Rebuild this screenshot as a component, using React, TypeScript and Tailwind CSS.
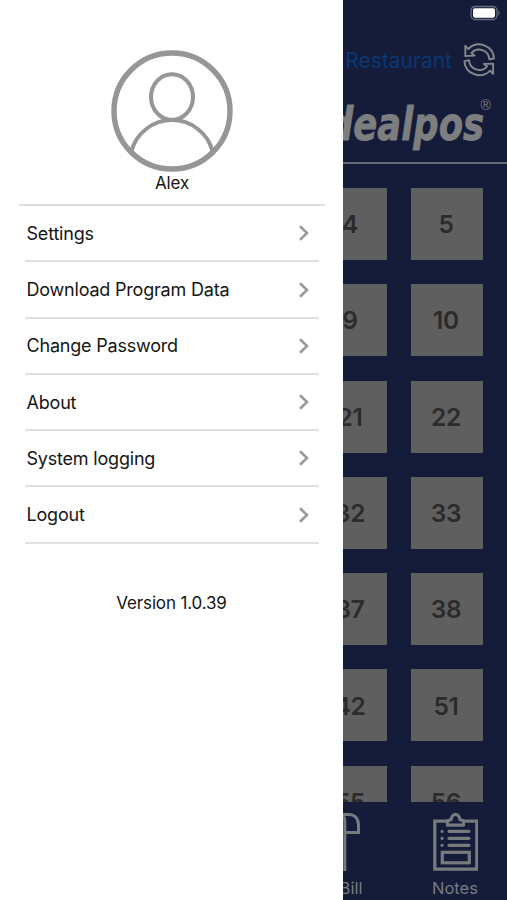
import { useState } from 'react'

const MENU_ITEMS = [
  'Settings',
  'Download Program Data',
  'Change Password',
  'About',
  'System logging',
  'Logout',
]

const TABLE_ROWS = [
  ['4', '5'],
  ['9', '10'],
  ['21', '22'],
  ['32', '33'],
  ['37', '38'],
  ['42', '51'],
  ['55', '56'],
]

export default function App() {
  const [selected, setSelected] = useState<string | null>(null)

  return (
    <div className="flex w-[507px] h-[900px] overflow-hidden bg-[#151c39] font-[Inter,'Liberation_Sans',sans-serif]">
      <Drawer selected={selected} onSelect={setSelected} />
      <TablesScreen />
    </div>
  )
}

function Drawer({ selected, onSelect }: { selected: string | null; onSelect: (item: string) => void }) {
  return (
    <aside className="flex flex-col w-[343px] shrink-0 bg-white text-[#151515] pt-[50px]">
      <div className="flex flex-col items-center ml-[19px] mr-[18px] h-[156.2px] border-b-2 border-[#dedede]">
        <AvatarIcon />
        <p className="text-[17px] leading-[22px] tracking-[-0.15px]">Alex</p>
      </div>

      <nav className="ml-[25px] mr-6">
        {MENU_ITEMS.map(item => (
          <button
            key={item}
            type="button"
            aria-current={selected === item}
            onClick={() => onSelect(item)}
            className="flex items-center justify-between w-full h-[56.25px] pl-[1.5px] pr-[9px] border-b-2 border-[#e0e0e0] text-left text-[18px] tracking-[-0.2px]"
          >
            <span>{item}</span>
            <svg width="12" height="16" viewBox="0 0 12 16" fill="none" stroke="#9a9a9a" strokeWidth="2.6">
              <path d="M2 1.2 L9 8 L2 14.8" />
            </svg>
          </button>
        ))}
      </nav>

      <p className="mt-[47px] text-center text-[17px] leading-6 tracking-[-0.15px]">Version 1.0.39</p>
    </aside>
  )
}

function TablesScreen() {
  return (
    <main className="flex flex-col flex-1 min-w-0 overflow-hidden">
      <div className="flex justify-end h-[26px] pt-[5px] pr-[6px]">
        <BatteryIcon />
      </div>

      <header className="h-[138px] border-b-2 border-[#656a75]">
        <div className="flex items-center justify-end gap-[10px] h-[68px] pr-[11px]">
          <span className="pt-px text-[21px] text-[#093772]">Restaurant</span>
          <RefreshIcon />
        </div>
        <Logo />
      </header>

      <section className="flex flex-col gap-[24.3px] h-[638px] pt-6 pr-[24.5px] overflow-hidden">
        {TABLE_ROWS.map(row => (
          <div key={row[1]} className="flex justify-end gap-6 shrink-0">
            {row.map(table => (
              <div
                key={table}
                className="flex items-center justify-center w-[72px] h-[72px] pt-px pr-px shrink-0 bg-[#5f5f5f] text-[#2b2b2c] text-[24.5px] font-semibold tracking-[-0.3px]"
              >
                {table}
              </div>
            ))}
          </div>
        ))}
      </section>

      <footer className="flex justify-end h-[98px] pt-[10px] text-[#777a80] text-[16.5px]">
        <div className="flex flex-col items-center w-[104px] shrink-0">
          <BillIcon />
          <span className="leading-[28px]">Bill</span>
        </div>
        <div className="flex flex-col items-center w-[104px] shrink-0">
          <NotesIcon />
          <span className="leading-[28px]">Notes</span>
        </div>
      </footer>
    </main>
  )
}

function AvatarIcon() {
  return (
    <svg width="122" height="122" viewBox="0 0 122 122" fill="none" stroke="#969696" className="shrink-0">
      <circle cx="61" cy="61" r="58" strokeWidth="5.4" />
      <ellipse cx="61" cy="47" rx="21" ry="22.8" strokeWidth="4" />
      <path d="M20.5 101 A42 42 0 0 1 101.5 101" strokeWidth="4" />
    </svg>
  )
}

function BatteryIcon() {
  return (
    <svg width="32" height="17" viewBox="0 0 32 17" fill="none">
      <rect x="2" y="1.5" width="26" height="13" rx="4" stroke="#696c7c" strokeWidth="1.3" />
      <rect x="4" y="3.3" width="22" height="9.4" rx="2" fill="#fff" />
      <path d="M29.4 5.5 C31 6.3 31 9.7 29.4 10.5 Z" fill="#696c7c" />
    </svg>
  )
}

function RefreshIcon() {
  return (
    <svg
      width="34"
      height="34"
      viewBox="0 0 34 34"
      fill="none"
      stroke="#85878a"
      strokeWidth="1.9"
      strokeLinejoin="round"
      className="shrink-0"
    >
      <path d="M3.3 2.8 L6.3 6 A15 15 0 0 1 32 15.5 L27.3 16.3 A10.2 10.2 0 0 0 9.3 10.3 L12.5 12.6 L3.3 13 Z" />
      <path d="M31.1 30.8 L28.1 27.6 A15 15 0 0 1 2.4 18.1 L7.1 17.3 A10.2 10.2 0 0 0 25.1 23.3 L21.9 21 L31.1 20.6 Z" />
    </svg>
  )
}

function Logo() {
  return (
    <svg width="164" height="60" viewBox="0 0 164 60" fill="#7d7e80" className="overflow-hidden">
      <text
        x="-15"
        y="46"
        fontSize="46"
        fontWeight="700"
        fontFamily="DejaVu Sans, sans-serif"
        fontStyle="italic"
        stroke="#7d7e80"
        strokeWidth="0.9"
        textLength="156"
        lengthAdjust="spacingAndGlyphs"
      >
        dealpos
      </text>
      <text x="137.5" y="15.5" fontSize="14" fontFamily="Liberation Sans, sans-serif">®</text>
    </svg>
  )
}

function BillIcon() {
  return (
    <svg width="60" height="62" viewBox="0 0 60 62" fill="none" stroke="#777a7e" strokeWidth="3" className="shrink-0">
      <path d="M14 2.5 H28 C34 2.5 37.5 7 37.5 13 V20.5 H24" />
      <path d="M23.8 59 V9 C23.8 5.5 22 2.5 18 2.5" />
    </svg>
  )
}

function NotesIcon() {
  return (
    <svg width="46" height="62" viewBox="0 0 46 62" fill="none" stroke="#777a7e" strokeWidth="3.2" className="shrink-0">
      <path d="M16 9.2 H2.8 V57.2 H44.8 V9.2 H31" />
      <path d="M15.5 13.2 V9 L19 7.6 C20.5 0.5 26.5 0.5 28 7.6 L31.5 9 V13.2 Z" strokeLinejoin="round" />
      <path
        d="M10 19.3 h0.1 M17 19.3 h20 M10 26.3 h0.1 M17 26.3 h20 M10 33.3 h0.1 M17 33.3 h20"
        strokeLinecap="round"
      />
      <rect x="10.3" y="40.3" width="27" height="10.5" />
    </svg>
  )
}
